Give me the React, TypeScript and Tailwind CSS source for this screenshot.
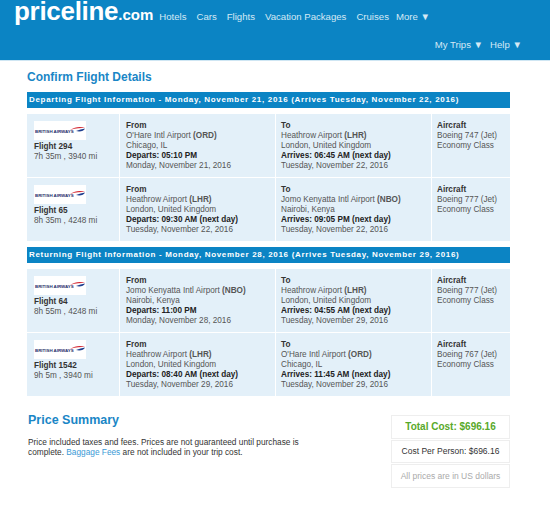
const F = "font-['Liberation_Sans',Arial,sans-serif]";

type Leg = {
  flight: string; dur: string;
  from: string[];
  to: string[];
  plane: string;
};

function Logo() {
  return (
    <div className="w-[52px] h-[19px] bg-white relative overflow-hidden">
      <span className="absolute left-[1px] top-[8px] text-[4.4px] leading-[6px] font-bold text-[#1f2f6b] whitespace-nowrap">BRITISH AIRWAYS</span>
      <svg className="absolute left-[36px] top-[4px]" width="16" height="9" viewBox="0 0 16 9">
        <path d="M0 5 C5 2 10 1 15 3 C11 3 6 3 0 5Z" fill="#d3232e" />
        <path d="M6 6 C9 5 12 4 15 3.5 C14 6 10 7 6 6Z" fill="#1f3f8f" />
      </svg>
    </div>
  );
}

function Place({ label, d, className }: { label: string; d: string[]; className: string }) {
  return (
    <div className={`${className} pt-[7px] text-[#555] whitespace-nowrap`}>
      <div className="font-bold text-[#333]">{label}</div>
      <div>{d[0]} <span className="font-bold">({d[1]})</span></div>
      <div>{d[2]}</div>
      <div className="font-bold text-[#222]">{d[3]}</div>
      <div>{d[4]}</div>
    </div>
  );
}

function Row({ leg }: { leg: Leg }) {
  return (
    <div className="grid grid-cols-[91px_155px_155px_79px] gap-x-[1px] h-[63px] bg-[#e3f0f9] text-[8.2px] leading-[10px]">
      <div className="pl-[7px] pt-[7px] text-[#555] whitespace-nowrap">
        <Logo />
        <div className="font-bold text-[#333] mt-[2px]">{leg.flight}</div>
        <div>{leg.dur}</div>
      </div>
      <div className="border-l border-white"><Place className="pl-[6px]" label="From" d={leg.from} /></div>
      <div className="border-l border-white"><Place className="pl-[5px]" label="To" d={leg.to} /></div>
      <div className="border-l border-white pl-[5px] pt-[7px] text-[#555] whitespace-nowrap">
        <div className="font-bold text-[#333]">Aircraft</div>
        <div>{leg.plane}</div>
        <div>Economy Class</div>
      </div>
    </div>
  );
}

function Bar({ children }: { children: string }) {
  return (
    <div className="h-[16px] bg-[#0b84c4] text-white font-bold text-[8px] leading-[16px] pl-[2px] tracking-[0.68px] whitespace-nowrap">
      {children}
    </div>
  );
}

const out: Leg[] = [
  { flight: "Flight 294", dur: "7h 35m , 3940 mi", plane: "Boeing 747 (Jet)",
    from: ["O'Hare Intl Airport", "ORD", "Chicago, IL", "Departs: 05:10 PM", "Monday, November 21, 2016"],
    to: ["Heathrow Airport", "LHR", "London, United Kingdom", "Arrives: 06:45 AM (next day)", "Tuesday, November 22, 2016"] },
  { flight: "Flight 65", dur: "8h 35m , 4248 mi", plane: "Boeing 777 (Jet)",
    from: ["Heathrow Airport", "LHR", "London, United Kingdom", "Departs: 09:30 AM (next day)", "Tuesday, November 22, 2016"],
    to: ["Jomo Kenyatta Intl Airport", "NBO", "Nairobi, Kenya", "Arrives: 09:05 PM (next day)", "Tuesday, November 22, 2016"] },
];
const back: Leg[] = [
  { flight: "Flight 64", dur: "8h 55m , 4248 mi", plane: "Boeing 777 (Jet)",
    from: ["Jomo Kenyatta Intl Airport", "NBO", "Nairobi, Kenya", "Departs: 11:00 PM", "Monday, November 28, 2016"],
    to: ["Heathrow Airport", "LHR", "London, United Kingdom", "Arrives: 04:55 AM (next day)", "Tuesday, November 29, 2016"] },
  { flight: "Flight 1542", dur: "9h 5m , 3940 mi", plane: "Boeing 767 (Jet)",
    from: ["Heathrow Airport", "LHR", "London, United Kingdom", "Departs: 08:40 AM (next day)", "Tuesday, November 29, 2016"],
    to: ["O'Hare Intl Airport", "ORD", "Chicago, IL", "Arrives: 11:45 AM (next day)", "Tuesday, November 29, 2016"] },
];

function Section({ title, legs }: { title: string; legs: Leg[] }) {
  return (
    <div>
      <Bar>{title}</Bar>
      <div className="mt-[6px] flex flex-col gap-[1px] bg-white">
        {legs.map((l) => <Row key={l.flight} leg={l} />)}
      </div>
    </div>
  );
}

export default function App() {
  return (
    <div className={`${F} w-[550px] h-[507px] bg-white overflow-hidden`}>
      <header className="h-[61px] bg-[#0b84c4] border-b border-[#cfe6f3] text-[#d5e9f5] text-[9.6px]">
        <div className="flex items-baseline h-[31px] pl-[14px]">
          <span className="text-white font-bold text-[26px] leading-[23px] tracking-[-0.3px]">priceline</span>
          <span className="text-white font-bold text-[15px] leading-[23px]">.com</span>
          <nav className="ml-[6px] flex gap-[10px] whitespace-nowrap">
            <span>Hotels</span><span>Cars</span><span>Flights</span><span>Vacation Packages</span><span>Cruises</span>
            <span className="-ml-[3px]">More ▼</span>
          </nav>
        </div>
        <div className="flex justify-end gap-[7px] pr-[28px] pt-[7px]">
          <span>My Trips ▼</span><span>Help ▼</span>
        </div>
      </header>
      <main className="pl-[27px] w-[510px]">
        <h1 className="text-[#1a86c6] font-bold text-[12px] leading-[14px] mt-[9px] mb-[8px]">Confirm Flight Details</h1>
        <div className="flex flex-col gap-[6px]">
          <Section title="Departing Flight Information - Monday, November 21, 2016 (Arrives Tuesday, November 22, 2016)" legs={out} />
          <Section title="Returning Flight Information - Monday, November 28, 2016 (Arrives Tuesday, November 29, 2016)" legs={back} />
        </div>
        <div className="flex justify-between mt-[16px]">
          <div className="w-[290px] pl-[1px]">
            <h2 className="text-[#1a86c6] font-bold text-[12.5px] leading-[16px]">Price Summary</h2>
            <p className="mt-[9px] text-[8.3px] leading-[10px] text-[#333]">
              Price included taxes and fees. Prices are not guaranteed until purchase is complete.{" "}
              <span className="text-[#3a9ad6]">Baggage Fees</span> are not included in your trip cost.
            </p>
          </div>
          <div className="w-[119px] flex flex-col gap-[1px] text-center mt-[3px]">
            <div className="h-[24px] border border-[#eee] leading-[22px] text-[10px] font-bold text-[#58a92a]">Total Cost: $696.16</div>
            <div className="h-[23px] border border-[#eee] leading-[21px] text-[8.5px] text-[#333]">Cost Per Person: $696.16</div>
            <div className="h-[24px] border border-[#eee] leading-[22px] text-[8.5px] text-[#aaa]">All prices are in US dollars</div>
          </div>
        </div>
      </main>
    </div>
  );
}
